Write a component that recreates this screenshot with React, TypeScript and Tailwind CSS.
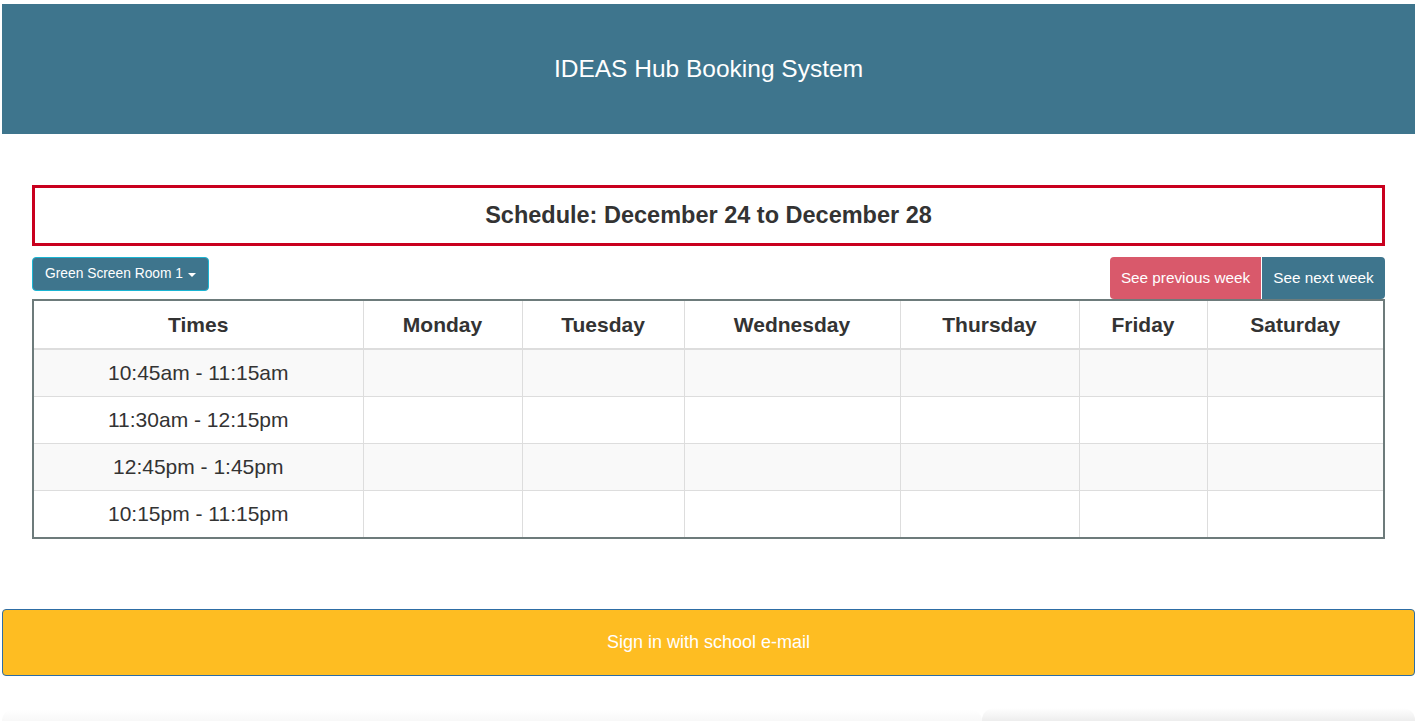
import React from "react";

const days = ["Monday", "Tuesday", "Wednesday", "Thursday", "Friday", "Saturday"];
const widths = ["w-[329px]", "w-[159px]", "w-[162px]", "w-[216px]", "w-[179px]", "w-[128px]", "w-[176px]"];
const times = ["10:45am - 11:15am", "11:30am - 12:15pm", "12:45pm - 1:45pm", "10:15pm - 11:15pm"];

export default function App() {
  return (
    <div className="min-h-[721px] bg-white pl-[2px] pr-[4px] pt-[4px] text-[#333]" style={{ fontFamily: '"Liberation Sans", Arial, sans-serif' }}>
      <header className="flex h-[130px] items-center justify-center bg-[#3e758d]">
        <h1 className="text-[24.5px] text-white">IDEAS Hub Booking System</h1>
      </header>

      <main className="px-[30px] pt-[51px]">
        <div className="flex h-[61px] items-center justify-center border-[3px] border-[#c9001e]">
          <h2 className="mt-[1px] text-[23.5px] font-bold text-[#333]">Schedule: December 24 to December 28</h2>
        </div>

        <div className="mt-[11px] flex items-start justify-between">
          <button className="flex h-[34px] items-center gap-[5px] rounded-[4px] border border-[#1bb5d3] bg-[#3e758d] px-[12px] text-[13.8px] text-white">
            Green Screen Room 1
            <span className="mt-[1px] h-0 w-0 border-l-[4px] border-r-[4px] border-t-[4px] border-l-transparent border-r-transparent border-t-white" />
          </button>
          <div className="flex">
            <button className="flex h-[42px] w-[151px] items-center justify-center rounded-l-[4px] bg-[#d9596b] text-[15.3px] text-white">
              See previous week
            </button>
            <button className="ml-[1px] flex h-[42px] w-[123px] items-center justify-center rounded-r-[4px] bg-[#3e758d] text-[15.3px] text-white">
              See next week
            </button>
          </div>
        </div>

        <div className="border-2 border-[#6d7b7b]">
          <table className="w-full table-fixed border-collapse text-[21px]">
            <colgroup>
              {widths.map((w, i) => (
                <col key={i} className={w} />
              ))}
            </colgroup>
            <thead>
              <tr className="h-[48px] border-b-2 border-[#ddd]">
                <th className="font-bold">Times</th>
                {days.map((d) => (
                  <th key={d} className="border-l border-[#ddd] font-bold">{d}</th>
                ))}
              </tr>
            </thead>
            <tbody>
              {times.map((t, i) => (
                <tr key={t} className={`h-[47px] border-t border-[#ddd] ${i % 2 === 0 ? "bg-[#f9f9f9]" : "bg-white"}`}>
                  <td className="text-center">{t}</td>
                  {days.map((d) => (
                    <td key={d} className="border-l border-[#ddd]" />
                  ))}
                </tr>
              ))}
            </tbody>
          </table>
        </div>
      </main>

      <div className="mt-[70px] flex h-[67px] items-center justify-center rounded-[4px] border border-[#2e6da4] bg-[#febd22] text-[18px] text-white">
        Sign in with school e-mail
      </div>

      <div className="mt-[29px] flex h-[17px] items-end">
        <div className="h-[12px] w-[980px] rounded-t-[10px] bg-gradient-to-b from-white to-[#f7f7f7]" />
        <div className="h-[14px] flex-1 rounded-t-[12px] bg-gradient-to-b from-white to-[#ececec]" />
      </div>
    </div>
  );
}
